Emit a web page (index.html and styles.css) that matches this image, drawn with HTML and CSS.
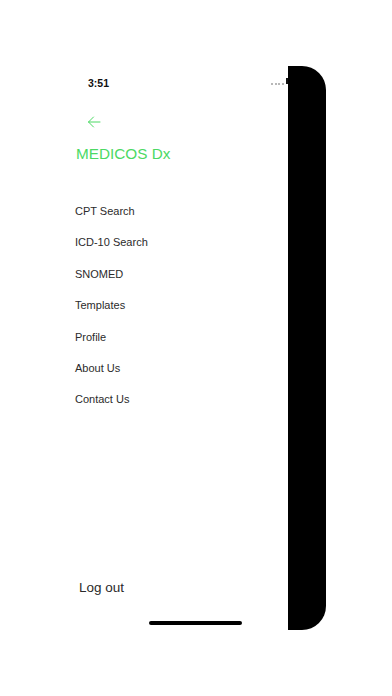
FILE: index.html
```html
<!DOCTYPE html>
<html lang="en">
<head>
<meta charset="utf-8">
<title>MEDICOS Dx</title>
<link rel="stylesheet" href="styles.css">
</head>
<body>
<div class="screen">
  <nav class="drawer">
    <div class="status">3:51</div>
    <svg class="back" width="14" height="12" viewBox="0 0 14 12" aria-label="Back">
      <path d="M13 6H1.5M6.5 1L1.5 6l5 5" fill="none" stroke="#4cd964" stroke-width="1" stroke-linecap="round" stroke-linejoin="round"/>
    </svg>
    <h1 class="title">MEDICOS Dx</h1>
    <ul class="menu">
      <li>CPT Search</li>
      <li>ICD-10 Search</li>
      <li>SNOMED</li>
      <li>Templates</li>
      <li>Profile</li>
      <li>About Us</li>
      <li>Contact Us</li>
    </ul>
    <div class="logout">Log out</div>
  </nav>
  <div class="dots"><i></i><i></i><i></i><i></i></div>
  <div class="peek"></div>
  <div class="panel"></div>
  <div class="home-indicator"></div>
</div>
</body>
</html>
```
FILE: styles.css
```css
html, body {
  margin: 0;
  padding: 0;
  background: #fff;
}
body {
  font-family: "Liberation Sans", Arial, sans-serif;
  color: #222;
}
.screen {
  position: relative;
  width: 392px;
  height: 696px;
  overflow: hidden;
}
.drawer {
  display: flex;
  flex-direction: column;
  align-items: flex-start;
  height: 696px;
  box-sizing: border-box;
  padding: 77px 0 100px 75px;
}
.status {
  margin-left: 13px;
  font-size: 10.5px;
  line-height: 12px;
  font-weight: bold;
  color: #111;
}
.back {
  display: block;
  margin: 26.5px 0 0 12px;
}
.title {
  margin: 16px 0 0 1px;
  font-size: 15.3px;
  line-height: 20px;
  font-weight: normal;
  color: #4cd964;
}
.menu {
  list-style: none;
  margin: 32.6px 0 0 0;
  padding: 0;
}
.menu li {
  font-size: 11px;
  line-height: 31.4px;
  height: 31.4px;
  color: #2b2b2b;
}
.logout {
  margin: auto 0 0 4px;
  font-size: 13.5px;
  line-height: 16px;
  color: #2a2a2a;
}
.dots {
  position: absolute;
  left: 271px;
  top: 83px;
  display: flex;
  gap: 1.5px;
}
.dots i {
  width: 2px;
  height: 1.5px;
  background: #b8b8b8;
}
.peek {
  position: absolute;
  left: 286px;
  top: 78px;
  width: 2px;
  height: 6px;
  background: #111;
}
.panel {
  position: absolute;
  left: 288px;
  top: 66px;
  width: 38px;
  height: 564px;
  background: #000;
  border-radius: 0 24px 24px 0;
}
.home-indicator {
  position: absolute;
  left: 149px;
  top: 621px;
  width: 93px;
  height: 4px;
  border-radius: 2px;
  background: #000;
}
```
